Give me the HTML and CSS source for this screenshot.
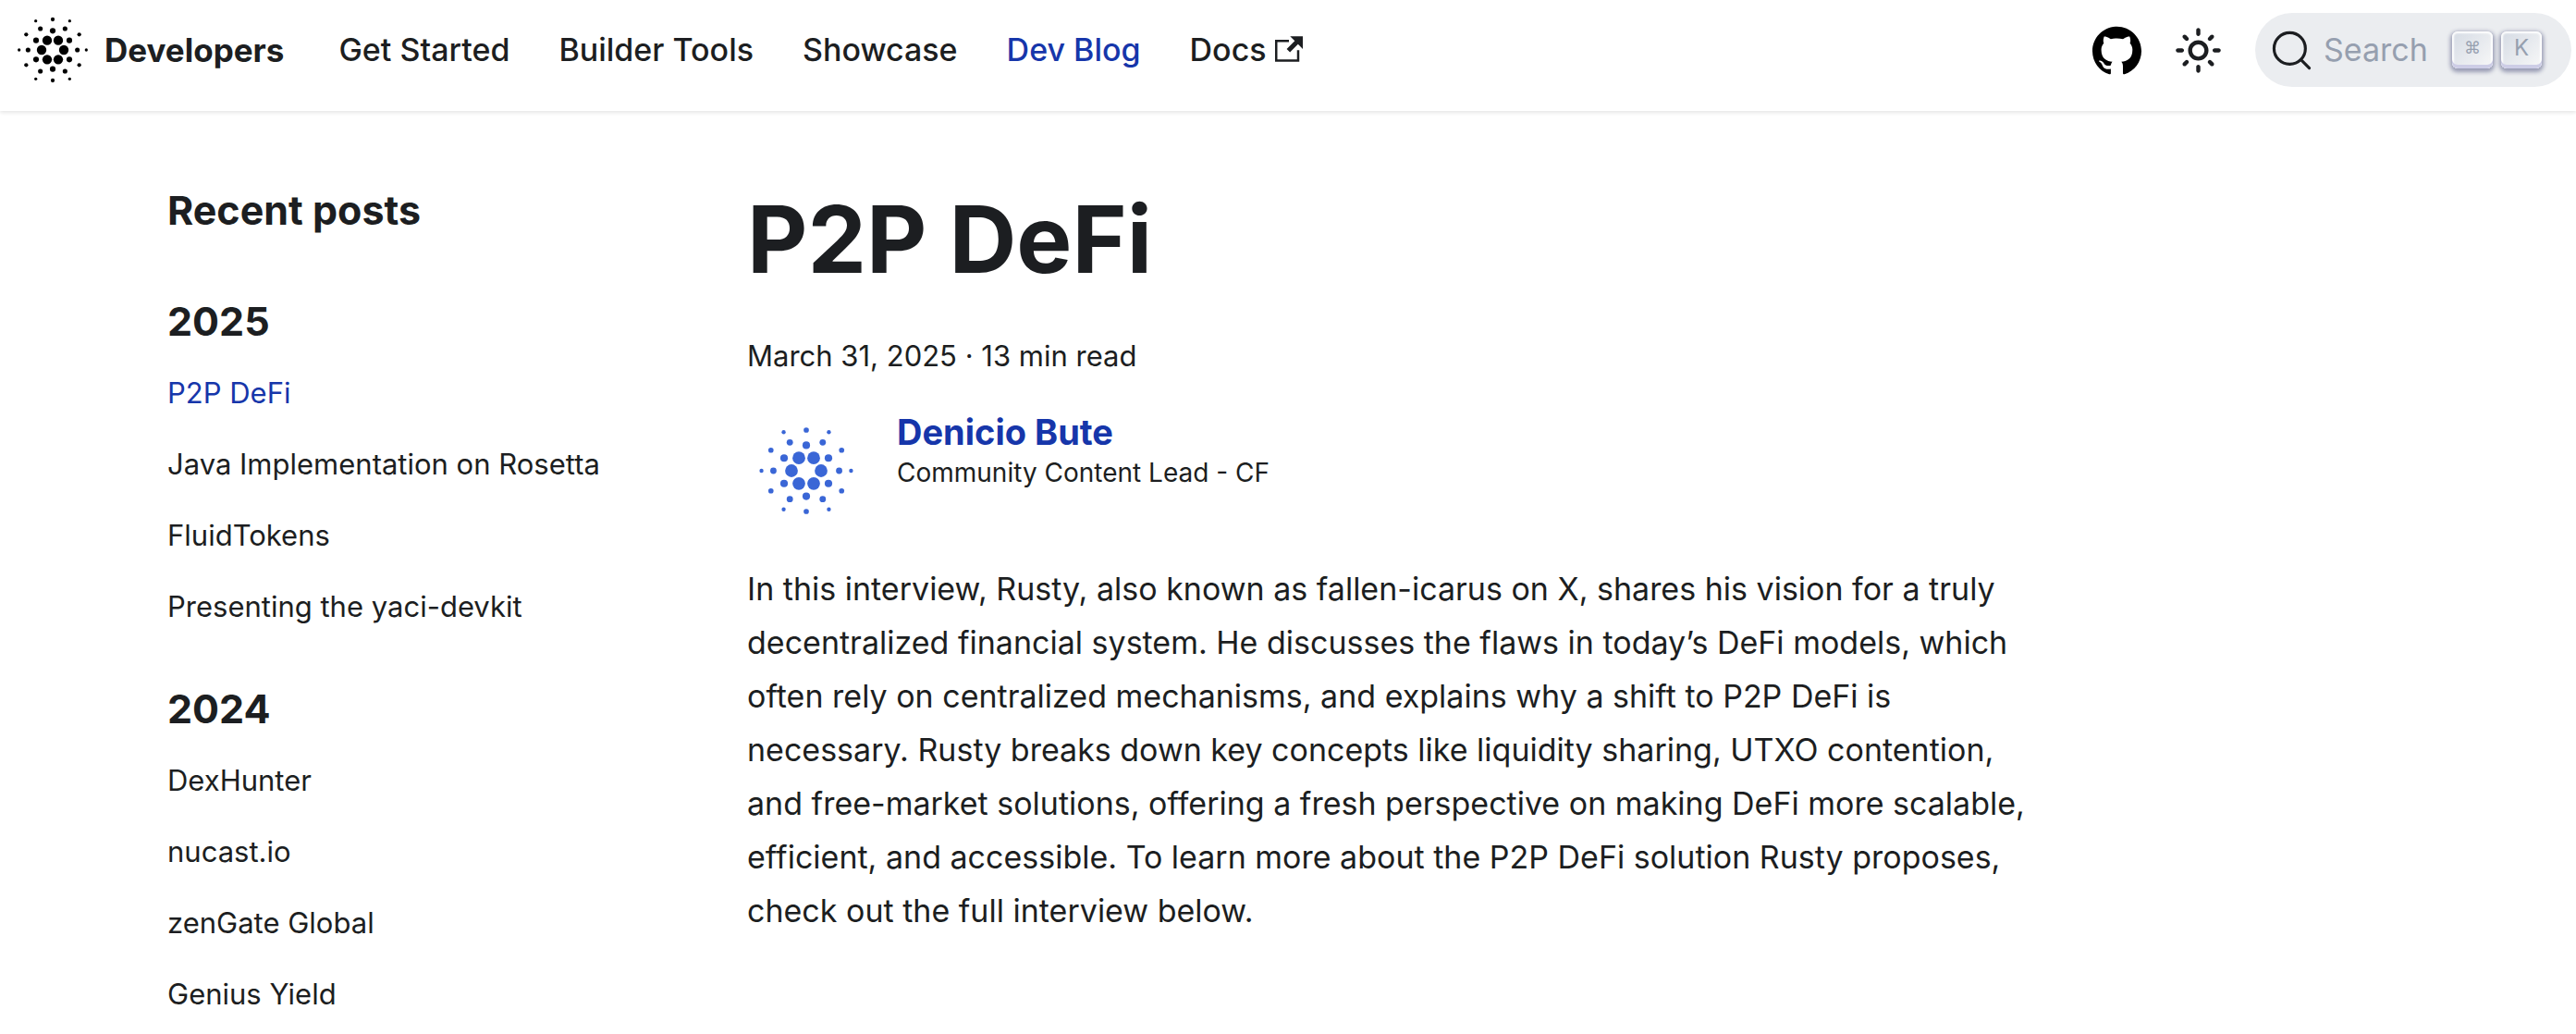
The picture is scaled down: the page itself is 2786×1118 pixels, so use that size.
FILE: index.html
```html
<!DOCTYPE html>
<html lang="en">
<head>
  <meta charset="utf-8">
  <meta name="viewport" content="width=device-width, initial-scale=1">
  <title>P2P DeFi | Developers</title>
  <link rel="stylesheet" href="styles.css">
</head>
<body>
  <svg class="sprite" aria-hidden="true">
    <symbol id="dots" viewBox="27 18 288 288">
      <g fill="currentColor">
        <circle cx="153" cy="131" r="15.5"/><circle cx="189" cy="131" r="15.5"/><circle cx="135" cy="162" r="15.5"/><circle cx="207" cy="162" r="15.5"/><circle cx="153" cy="193" r="15.5"/><circle cx="189" cy="193" r="15.5"/>
        <circle cx="171" cy="100" r="9.2"/><circle cx="171" cy="224" r="9.2"/><circle cx="117" cy="131" r="9.2"/><circle cx="225" cy="131" r="9.2"/><circle cx="117" cy="193" r="9.2"/><circle cx="225" cy="193" r="9.2"/>
        <circle cx="131" cy="93" r="7.7"/><circle cx="211" cy="93" r="7.7"/><circle cx="91" cy="162" r="7.7"/><circle cx="251" cy="162" r="7.7"/><circle cx="131" cy="231" r="7.7"/><circle cx="211" cy="231" r="7.7"/>
        <circle cx="171" cy="63" r="6.4"/><circle cx="171" cy="261" r="6.4"/><circle cx="85" cy="112" r="6.4"/><circle cx="257" cy="112" r="6.4"/><circle cx="85" cy="211" r="6.4"/><circle cx="257" cy="211" r="6.4"/>
        <circle cx="116" cy="68" r="4.9"/><circle cx="226" cy="68" r="4.9"/><circle cx="62" cy="162" r="4.9"/><circle cx="280" cy="162" r="4.9"/><circle cx="116" cy="256" r="4.9"/><circle cx="226" cy="256" r="4.9"/>
      </g>
    </symbol>
  </svg>

  <header class="navbar">
    <a class="brand" href="#">
      <svg class="brand-logo" aria-hidden="true"><use href="#dots"/></svg>
      <span>Developers</span>
    </a>
    <nav class="nav-links" aria-label="Main">
      <a href="#">Get Started</a>
      <a href="#">Builder Tools</a>
      <a href="#">Showcase</a>
      <a class="active" href="#">Dev Blog</a>
      <a class="external" href="#">Docs
        <svg class="external-icon" viewBox="0 0 24 24" aria-hidden="true"><path fill="currentColor" d="M21 13v10h-21v-19h12v2h-10v15h17v-8h2zm3-12h-10.988l4.035 4-6.977 7.07 2.828 2.828 6.977-7.07 4.125 4.172v-11z"/></svg>
      </a>
    </nav>
    <div class="nav-tools">
      <a class="icon-link" href="#" aria-label="GitHub repository">
        <svg viewBox="0 0 24 24" aria-hidden="true"><path d="M12 .297c-6.63 0-12 5.373-12 12 0 5.303 3.438 9.8 8.205 11.385.6.113.82-.258.82-.577 0-.285-.01-1.04-.015-2.04-3.338.724-4.042-1.61-4.042-1.61C4.422 18.07 3.633 17.7 3.633 17.7c-1.087-.744.084-.729.084-.729 1.205.084 1.838 1.236 1.838 1.236 1.07 1.835 2.809 1.305 3.495.998.108-.776.417-1.305.76-1.605-2.665-.3-5.466-1.332-5.466-5.93 0-1.31.465-2.38 1.235-3.22-.135-.303-.54-1.523.105-3.176 0 0 1.005-.322 3.3 1.23.96-.267 1.98-.399 3-.405 1.02.006 2.04.138 3 .405 2.28-1.552 3.285-1.23 3.285-1.23.645 1.653.24 2.873.12 3.176.765.84 1.23 1.91 1.23 3.22 0 4.61-2.805 5.625-5.475 5.92.42.36.81 1.096.81 2.22 0 1.606-.015 2.896-.015 3.286 0 .315.21.69.825.57C20.565 22.092 24 17.592 24 12.297c0-6.627-5.373-12-12-12"/></svg>
      </a>
      <button class="icon-button" type="button" aria-label="Switch between dark and light mode">
        <svg viewBox="0 0 24 24" aria-hidden="true"><path fill="currentColor" d="M12,9c1.65,0,3,1.35,3,3s-1.35,3-3,3s-3-1.35-3-3S10.35,9,12,9 M12,7c-2.76,0-5,2.24-5,5s2.24,5,5,5s5-2.24,5-5 S14.76,7,12,7L12,7z M2,13l2,0c0.55,0,1-0.45,1-1s-0.45-1-1-1l-2,0c-0.55,0-1,0.45-1,1S1.45,13,2,13z M20,13l2,0c0.55,0,1-0.45,1-1 s-0.45-1-1-1l-2,0c-0.55,0-1,0.45-1,1S19.45,13,20,13z M11,2v2c0,0.55,0.45,1,1,1s1-0.45,1-1V2c0-0.55-0.45-1-1-1S11,1.45,11,2z M11,20v2c0,0.55,0.45,1,1,1s1-0.45,1-1v-2c0-0.55-0.45-1-1-1C11.45,19,11,19.45,11,20z M5.99,4.58c-0.39-0.39-1.03-0.39-1.41,0 c-0.39,0.39-0.39,1.03,0,1.41l1.06,1.06c0.39,0.39,1.03,0.39,1.41,0s0.39-1.03,0-1.41L5.99,4.58z M18.36,16.95 c-0.39-0.39-1.03-0.39-1.41,0c-0.39,0.39-0.39,1.03,0,1.41l1.06,1.06c0.39,0.39,1.03,0.39,1.41,0c0.39-0.39,0.39-1.03,0-1.41 L18.36,16.95z M19.42,5.99c0.39-0.39,0.39-1.03,0-1.41c-0.39-0.39-1.03-0.39-1.41,0l-1.06,1.06c-0.39,0.39-0.39,1.03,0,1.41 s1.03,0.39,1.41,0L19.42,5.99z M7.05,18.36c0.39-0.39,0.39-1.03,0-1.41c-0.39-0.39-1.03-0.39-1.41,0l-1.06,1.06 c-0.39,0.39-0.39,1.03,0,1.41s1.03,0.39,1.41,0L7.05,18.36z"/></svg>
      </button>
      <button class="search" type="button">
        <svg class="search-icon" viewBox="0 0 20 20" aria-hidden="true"><path d="M14.386 14.386l4.0877 4.0877-4.0877-4.0877c-2.9418 2.9419-7.7115 2.9419-10.6533 0-2.9419-2.9418-2.9419-7.7115 0-10.6533 2.9418-2.9419 7.7115-2.9419 10.6533 0 2.9419 2.9418 2.9419 7.7115 0 10.6533z" fill="none" stroke="currentColor" stroke-width="1.4" stroke-linecap="round" stroke-linejoin="round"/></svg>
        <span class="search-label">Search</span>
        <kbd class="key key-command">⌘</kbd>
        <kbd class="key">K</kbd>
      </button>
    </div>
  </header>

  <div class="layout">
    <aside class="sidebar">
      <h2>Recent posts</h2>
      <nav aria-label="Recent posts">
        <h3>2025</h3>
        <ul>
          <li><a class="active" href="#">P2P DeFi</a></li>
          <li><a href="#">Java Implementation on Rosetta</a></li>
          <li><a href="#">FluidTokens</a></li>
          <li><a href="#">Presenting the yaci-devkit</a></li>
        </ul>
        <h3>2024</h3>
        <ul>
          <li><a href="#">DexHunter</a></li>
          <li><a href="#">nucast.io</a></li>
          <li><a href="#">zenGate Global</a></li>
          <li><a href="#">Genius Yield</a></li>
        </ul>
      </nav>
    </aside>

    <main>
      <article class="post">
        <h1>P2P DeFi</h1>
        <p class="post-meta"><time datetime="2025-03-31">March 31, 2025</time> · 13 min read</p>
        <div class="author">
          <svg class="avatar" aria-hidden="true"><use href="#dots"/></svg>
          <div class="author-text">
            <a class="author-name" href="#">Denicio Bute</a>
            <span class="author-role">Community Content Lead - CF</span>
          </div>
        </div>
        <p class="post-body">In this interview, Rusty, also known as fallen-icarus on X, shares his vision for a truly decentralized financial system. He discusses the flaws in today’s DeFi models, which often rely on centralized mechanisms, and explains why a shift to P2P DeFi is necessary. Rusty breaks down key concepts like liquidity sharing, UTXO contention, and free-market solutions, offering a fresh perspective on making DeFi more scalable, efficient, and accessible. To learn more about the P2P DeFi solution Rusty proposes, check out the full interview below.</p>
      </article>
    </main>
  </div>
</body>
</html>
```
FILE: styles.css
```css
:root {
  --text: #1c1e21;
  --primary: #1636aa;
  --muted: #969faf;
}

* {
  box-sizing: border-box;
}

body {
  margin: 0;
  background: #fff;
  color: var(--text);
  font-family: Inter, "Liberation Sans", sans-serif;
  font-size: 34px;
  line-height: 58px;
}

a {
  color: inherit;
  text-decoration: none;
}

.active {
  color: var(--primary);
}

.sprite {
  display: block;
  width: 0;
  height: 0;
}

.navbar {
  display: flex;
  align-items: center;
  height: 120px;
  padding: 0 5px 12px 9px;
  box-shadow: 0 2px 4px rgba(0, 0, 0, 0.1);
}

.brand {
  display: flex;
  align-items: center;
  gap: 8px;
  margin-right: 59px;
  font-size: 35px;
  font-weight: 700;
}

.brand-logo {
  width: 96px;
  height: 96px;
  color: #000;
}

.nav-links {
  display: flex;
  gap: 53px;
  font-weight: 500;
}

.external-icon {
  width: 30px;
  height: 30px;
  vertical-align: -2px;
}

.nav-tools {
  display: flex;
  align-items: center;
  gap: 35px;
  margin-left: auto;
}

.icon-link,
.icon-button {
  display: flex;
  width: 53px;
  height: 53px;
  padding: 0;
  border: 0;
  background: none;
  color: inherit;
}

.icon-link svg,
.icon-button svg {
  width: 100%;
  height: 100%;
}

.search {
  display: flex;
  align-items: center;
  width: 342px;
  height: 80px;
  padding: 0 32px 0 17px;
  border: 0;
  border-radius: 40px;
  background: #ebedf0;
  color: var(--text);
  font: inherit;
}

.search-icon {
  width: 45px;
  height: 45px;
}

.search-label {
  margin: 0 auto 0 12px;
  color: var(--muted);
}

.key {
  width: 44px;
  height: 40px;
  margin-left: 7px;
  padding-bottom: 4px;
  border-radius: 6px;
  background: linear-gradient(-225deg, #d5dbe4, #f8f8f8);
  box-shadow: inset 0 -4px 0 0 #cdcde6, inset 0 0 2px 2px #fff, 0 2px 4px 2px rgba(30, 35, 90, 0.4);
  color: var(--muted);
  font-family: Inter, "Liberation Sans", sans-serif;
  font-size: 24px;
  line-height: 36px;
  text-align: center;
}

.key + .key {
  margin-left: 9px;
}

.key-command {
  font-family: "DejaVu Sans", sans-serif;
  font-size: 18px;
}

.layout {
  display: grid;
  grid-template-columns: 3fr 7fr 2fr;
  padding: 70px 97px 0 181px;
}

.sidebar {
  font-size: 31px;
  line-height: 53px;
}

.sidebar h2,
.sidebar h3 {
  margin: 0;
  font-size: 43px;
  line-height: 60px;
}

.sidebar h2 {
  margin: 7px 0 60px;
}

.sidebar h3 {
  margin-bottom: 21px;
}

.sidebar ul {
  display: flex;
  flex-direction: column;
  gap: 24px;
  margin: 0 0 54px;
  padding: 0;
  list-style: none;
}

.post {
  padding-right: 64px;
}

.post h1 {
  margin: 0 0 32px;
  font-size: 101px;
  line-height: 136px;
}

.post-meta {
  margin: 0 0 34px;
  font-size: 31px;
  line-height: 53px;
}

.author {
  display: flex;
  gap: 34px;
  margin-bottom: 35px;
}

.avatar {
  width: 128px;
  height: 128px;
  color: #3a66d6;
}

.author-text {
  display: flex;
  flex-direction: column;
}

.author-name {
  color: var(--primary);
  font-size: 38px;
  font-weight: 700;
  line-height: 44px;
}

.author-role {
  font-size: 28px;
  line-height: 44px;
}

.post-body {
  margin: 0;
}
```
